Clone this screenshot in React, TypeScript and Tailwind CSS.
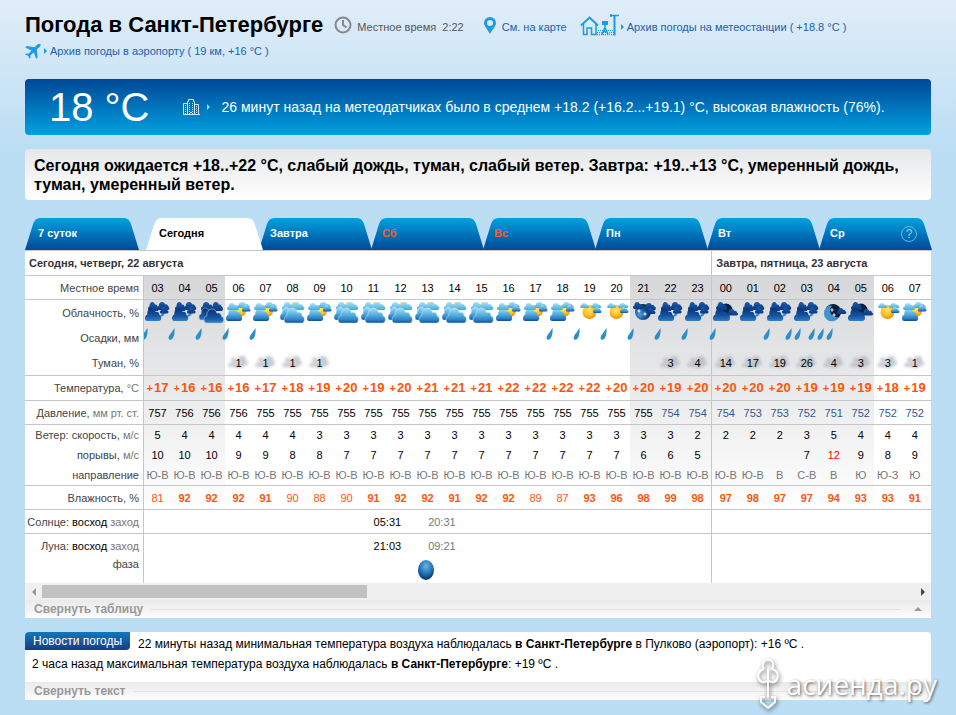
import type { ReactNode } from "react";

type Sky = "nightCloudy" | "nightOvercast" | "dayCloudy" | "overcast" | "sunny" | "moonClouds" | "moon" | "moonCloud";

interface Hour {
  time: string;
  sky: Sky;
  drops: number;
  fog?: number;
  temp: number;
  pressure: number;
  wind: number;
  gust?: number;
  dir: string;
  humidity: number;
}

const hour = (
  time: string,
  sky: Sky,
  drops: number,
  fog: number | undefined,
  temp: number,
  pressure: number,
  wind: number,
  gust: number | undefined,
  dir: string,
  humidity: number,
): Hour => ({ time, sky, drops, fog, temp, pressure, wind, gust, dir, humidity });

const none = undefined;

const hours: Hour[] = [
  hour("03", "nightCloudy", 1, none, 17, 757, 5, 10, "Ю-В", 81),
  hour("04", "nightCloudy", 1, none, 16, 756, 4, 10, "Ю-В", 92),
  hour("05", "nightOvercast", 1, none, 16, 756, 4, 10, "Ю-В", 92),
  hour("06", "dayCloudy", 1, 1, 16, 756, 4, 9, "Ю-В", 92),
  hour("07", "dayCloudy", 1, 1, 17, 755, 4, 9, "Ю-В", 91),
  hour("08", "overcast", 0, 1, 18, 755, 4, 8, "Ю-В", 90),
  hour("09", "dayCloudy", 0, 1, 19, 755, 3, 8, "Ю-В", 88),
  hour("10", "overcast", 0, none, 20, 755, 3, 7, "Ю-В", 90),
  hour("11", "overcast", 0, none, 19, 755, 3, 7, "Ю-В", 91),
  hour("12", "overcast", 0, none, 20, 755, 3, 7, "Ю-В", 92),
  hour("13", "overcast", 0, none, 21, 755, 3, 7, "Ю-В", 92),
  hour("14", "overcast", 0, none, 21, 755, 3, 7, "Ю-В", 91),
  hour("15", "overcast", 0, none, 21, 755, 3, 7, "Ю-В", 92),
  hour("16", "dayCloudy", 0, none, 22, 755, 3, 7, "Ю-В", 92),
  hour("17", "dayCloudy", 0, none, 22, 755, 3, 7, "Ю-В", 89),
  hour("18", "dayCloudy", 1, none, 22, 755, 3, 7, "Ю-В", 87),
  hour("19", "sunny", 1, none, 22, 755, 3, 7, "Ю-В", 93),
  hour("20", "sunny", 1, none, 20, 755, 3, 7, "Ю-В", 96),
  hour("21", "moonClouds", 1, none, 20, 755, 3, 6, "Ю-В", 98),
  hour("22", "nightCloudy", 1, 3, 19, 754, 3, 6, "Ю-В", 99),
  hour("23", "nightCloudy", 1, 4, 20, 754, 2, 5, "Ю-В", 98),
  hour("00", "moonCloud", 1, 14, 20, 754, 2, none, "Ю-В", 97),
  hour("01", "nightCloudy", 0, 17, 20, 753, 2, none, "Ю-В", 98),
  hour("02", "nightCloudy", 1, 19, 20, 753, 2, none, "В", 97),
  hour("03", "nightCloudy", 2, 26, 19, 752, 3, 7, "С-В", 97),
  hour("04", "moon", 3, 4, 19, 751, 5, 12, "В", 94),
  hour("05", "moonCloud", 0, 3, 19, 752, 4, 9, "Ю", 93),
  hour("06", "sunny", 0, 3, 18, 752, 4, 8, "Ю-З", 93),
  hour("07", "dayCloudy", 0, 1, 19, 752, 4, 9, "Ю", 91),
];

const TODAY_HOURS = 21;
const isNight = (h: Hour) => Number(h.time) < 6 || Number(h.time) > 20;

/* ---------- drawings ---------- */

function Gradients() {
  return (
    <svg width="0" height="0" className="absolute" aria-hidden="true">
      <defs>
        <linearGradient id="tab" x1="0" y1="0" x2="0" y2="1">
          <stop offset="0" stopColor="#02a1e1" />
          <stop offset="1" stopColor="#004896" />
        </linearGradient>
        <linearGradient id="day" x1="0" y1="0" x2="0" y2="1">
          <stop offset="0" stopColor="#a6e0f7" />
          <stop offset=".45" stopColor="#58b0df" />
          <stop offset=".8" stopColor="#2b80c4" />
          <stop offset="1" stopColor="#0a4c9a" />
        </linearGradient>
        <linearGradient id="dayLight" x1="0" y1="0" x2="0" y2="1">
          <stop offset="0" stopColor="#a9e4f9" />
          <stop offset="1" stopColor="#45a9da" />
        </linearGradient>
        <linearGradient id="night" x1="0" y1="0" x2="0" y2="1">
          <stop offset="0" stopColor="#1c5cab" />
          <stop offset=".5" stopColor="#124894" />
          <stop offset="1" stopColor="#0b3a85" />
        </linearGradient>
        <linearGradient id="nightFront" x1="0" y1="0" x2="0" y2="1">
          <stop offset="0" stopColor="#0a3274" />
          <stop offset=".6" stopColor="#15529f" />
          <stop offset="1" stopColor="#2f80c8" />
        </linearGradient>
        <radialGradient id="sun" cx=".45" cy=".35" r=".65">
          <stop offset="0" stopColor="#ffe96a" />
          <stop offset=".6" stopColor="#fdc021" />
          <stop offset="1" stopColor="#f08c0c" />
        </radialGradient>
        <radialGradient id="moonFill" cx=".3" cy=".65" r=".75">
          <stop offset="0" stopColor="#4aa3dd" />
          <stop offset=".5" stopColor="#1c559c" />
          <stop offset="1" stopColor="#0a1c3c" />
        </radialGradient>
        <radialGradient id="phase" cx=".5" cy=".3" r=".7">
          <stop offset="0" stopColor="#6db6e4" />
          <stop offset=".6" stopColor="#1f6fb4" />
          <stop offset="1" stopColor="#0b2f63" />
        </radialGradient>
        <filter id="soft" x="-30%" y="-30%" width="160%" height="160%">
          <feGaussianBlur stdDeviation="1.5" />
        </filter>
      </defs>
    </svg>
  );
}

function Cloud({ x, y, sx, sy, fill }: { x: number; y: number; sx: number; sy?: number; fill: string }) {
  return (
    <path
      transform={`translate(${x} ${y}) scale(${sx} ${sy ?? sx})`}
      fill={`url(#${fill})`}
      d="M2.500 10C.7 10 0 8.800 0 7.600 0 6 1.200 5.200 2.400 5.100 2.200 2.200 4.200 0 7 0c2 0 3.600 1 4.200 3 .3-.1.7-.2 1.200-.2 1.800 0 2.800 1.300 2.800 2.600 1.200.2 1.800 1.100 1.800 2.300C17 8.900 16.200 10 14.700 10z"
    />
  );
}

function Star({ x, y }: { x: number; y: number }) {
  return <path transform={`translate(${x} ${y})`} fill="#fff" d="M0-2.500.6-.6 2.500 0 .6.6 0 2.500-.6.6-2.500 0-.6-.6z" />;
}

const skies: Record<Sky, ReactNode> = {
  nightCloudy: (
    <>
      <path d="M14 9h7c1 4-1 7-5 7z" fill="#c9def1" />
      <path d="M16 16a5 5 0 0 0 5-5l-3 1z" fill="#3b86cb" />
      <Cloud x={4} y={1} sx={0.62} sy={0.9} fill="night" />
      <Cloud x={13} y={1} sx={0.72} sy={0.8} fill="night" />
      <Cloud x={16} y={6} sx={0.5} sy={0.65} fill="night" />
      <Cloud x={1} y={7} sx={0.95} sy={1.3} fill="nightFront" />
    </>
  ),
  nightOvercast: (
    <>
      <Cloud x={3} y={1} sx={0.75} sy={0.9} fill="night" />
      <Cloud x={13} y={1} sx={0.7} sy={0.9} fill="night" />
      <g stroke="#9cc2e6" strokeWidth=".5">
        <Cloud x={1} y={7} sx={0.9} sy={1.2} fill="nightFront" />
        <Cloud x={6} y={8} sx={1.15} sy={1.4} fill="nightFront" />
      </g>
    </>
  ),
  dayCloudy: (
    <>
      <circle cx="15.500" cy="10" r="5.500" fill="url(#sun)" />
      <Cloud x={12} y={1} sx={0.75} sy={0.6} fill="dayLight" />
      <Cloud x={17} y={4} sx={0.5} sy={0.65} fill="day" />
      <Cloud x={1} y={7} sx={0.95} sy={1.3} fill="day" />
      <Cloud x={2} y={2} sx={0.7} sy={0.7} fill="dayLight" />
    </>
  ),
  overcast: (
    <>
      <circle cx="16" cy="5" r="4" fill="#fbd75c" />
      <Cloud x={3} y={1} sx={0.75} sy={0.8} fill="dayLight" />
      <Cloud x={12} y={1} sx={0.78} sy={0.8} fill="dayLight" />
      <g stroke="#c8e9f9" strokeWidth=".4">
        <Cloud x={1} y={6} sx={0.9} sy={1.3} fill="day" />
        <Cloud x={5} y={7} sx={1.2} sy={1.5} fill="day" />
      </g>
    </>
  ),
  sunny: (
    <>
      <circle cx="13.500" cy="11" r="7" fill="url(#sun)" />
      <Cloud x={4} y={2} sx={0.55} sy={0.5} fill="dayLight" />
      <Cloud x={15} y={2} sx={0.62} sy={0.5} fill="dayLight" />
      <Cloud x={17} y={6} sx={0.5} sy={0.6} fill="day" />
    </>
  ),
  moonClouds: (
    <>
      <circle cx="13" cy="11" r="8" fill="url(#moonFill)" />
      <Cloud x={3} y={1} sx={0.6} sy={0.7} fill="night" />
      <Cloud x={14} y={2} sx={0.7} sy={0.7} fill="night" />
      <Cloud x={17} y={7} sx={0.5} sy={0.6} fill="night" />
      <Star x={9} y={10} />
      <Star x={15} y={13} />
    </>
  ),
  moon: (
    <>
      <circle cx="13" cy="11" r="8" fill="#0b1d3e" />
      <path d="M7 6a8 8 0 1 0 12 10c-3 1-9-1-9-7 0-2 1-3 2-4-2-1-4 0-5 1z" fill="#3f93d3" />
      <Star x={12} y={9} />
      <Star x={14} y={14} />
      <Cloud x={17} y={7} sx={0.55} sy={0.6} fill="night" />
    </>
  ),
  moonCloud: (
    <>
      <circle cx="14" cy="9" r="6.500" fill="#0b2145" />
      <Cloud x={4} y={1} sx={0.65} sy={0.8} fill="night" />
      <Cloud x={15} y={8} sx={0.65} sy={0.65} fill="night" />
      <Cloud x={1} y={7} sx={1} sy={1.3} fill="nightFront" />
    </>
  ),
};

function SkyIcon({ sky }: { sky: Sky }) {
  return (
    <svg width="27" height="24" viewBox="0 0 27 24" className="block">
      {skies[sky]}
    </svg>
  );
}

function Drops({ count, clipped }: { count: number; clipped: boolean }) {
  return (
    <div className={clipped ? "overflow-hidden" : ""}>
      <div className="-ml-[13px] flex w-[26px] justify-center gap-[2px]">
        {Array.from({ length: count }, (_, i) => (
          <svg key={i} width="7" height="12" viewBox="0 0 7 12" className="shrink-0">
            <path d="M6.500 0C6.900 4 6.200 8.500 4.400 10.800 2.800 12.600.200 12 .6 9.600 1 7 4.500 3.500 6.500 0z" fill="#2d8fc9" />
          </svg>
        ))}
      </div>
    </div>
  );
}

function Fog({ value }: { value: number }) {
  return (
    <div className="grid place-items-center">
      <svg width="27" height="20" viewBox="0 0 27 20" className="[grid-area:1/1]">
        <g filter="url(#soft)" fill="#a9adba" opacity=".65">
          <ellipse cx="9" cy="7" rx="3" ry="2.500" />
          <ellipse cx="17" cy="6" rx="4" ry="3" />
          <ellipse cx="20" cy="10" rx="3" ry="2.500" />
          <ellipse cx="7" cy="12" rx="4" ry="2" />
          <ellipse cx="14" cy="12" rx="6" ry="3" />
        </g>
      </svg>
      <span className="[grid-area:1/1]">{value}</span>
    </div>
  );
}

const ClockIcon = () => (
  <svg width="18" height="18" viewBox="0 0 18 18" fill="none" stroke="#85898d" strokeWidth="2">
    <circle cx="9" cy="9" r="7.500" />
    <path d="M9 4v5l3.500 2.500" />
  </svg>
);

const PinIcon = () => (
  <svg width="12" height="17" viewBox="0 0 12 17">
    <path fillRule="evenodd" fill="#1a9be6" d="M6 0a6 6 0 0 1 6 6c0 3.500-4 6.500-6 11C4 12.500 0 9.500 0 6a6 6 0 0 1 6-6zm0 3a3 3 0 1 0 0 6 3 3 0 0 0 0-6z" />
  </svg>
);

const StationIcon = () => (
  <svg width="39" height="22" viewBox="0 0 39 22" fill="none" stroke="#1a9be6" strokeWidth="2">
    <path d="M1 11.500 9.500 3.500l8.500 8" />
    <path d="M3.500 10v10.500H7V14h4.500v6.500H16V10" strokeWidth="1.500" />
    <path d="M17 20.500h17" strokeWidth="1.500" strokeDasharray="1 1" />
    <path d="M17 18.500h17M18 16.500h16" strokeWidth="1" strokeDasharray="1 1" />
    <path d="M22 7h6v4h-6z" fill="#1a9be6" stroke="none" />
    <path d="M25 11v3M22 20.500l3-7 3 7M22.500 17.500h5" strokeWidth="1.500" />
    <path d="M34.500 1.500v20" />
    <path d="M30 1.500h9M31 0v3" strokeWidth="1.500" />
  </svg>
);

const PlaneIcon = () => (
  <svg width="16" height="15" viewBox="0 0 16 15" fill="#1a9be6">
    <path d="M15.300.2c.8.600.2 2-.8 2.900L11.800 5.600 12.600 13.600l-1.400 1.200L8.800 8.500 5.400 11.200l.2 2.600-1 .9-1.500-2.900L0 10.500l1-.9 2.600.1L6.600 6.500.3 3.400l1.400-1.300 7.800 1.200L12.200.8c1-.9 2.400-1.300 3.100-.6z" />
  </svg>
);

const CityIcon = () => (
  <svg width="17" height="16" viewBox="0 0 17 16" fill="none" stroke="#cfe6f6">
    <path d="M.5 15.500v-11h4M4.500 15.500V2.500h1V.5h5v2h1v13M11.500 5.500h4v10M0 15.500h17" />
    <path d="M2.500 6v9M6.500 4v11M9.500 4v11M13.500 7v8" strokeDasharray="1 1" />
    <path d="M7 13.500h2" />
  </svg>
);

const Arrow = ({ color }: { color: string }) => (
  <svg width="3" height="6" viewBox="0 0 3 6" className="shrink-0">
    <path d="M0 0 3 3 0 6z" fill={color} />
  </svg>
);

/* ---------- tabs ---------- */

const laterDays = [
  { name: "Завтра", weekend: false },
  { name: "Сб", weekend: true },
  { name: "Вс", weekend: true },
  { name: "Пн", weekend: false },
  { name: "Вт", weekend: false },
  { name: "Ср", weekend: false },
];

function Tab({ children, active, className, textClass }: { children: ReactNode; active?: boolean; className: string; textClass: string }) {
  return (
    <button type="button" role="tab" aria-selected={!!active} className={`grid h-8 items-center text-left text-[11px] font-bold ${className}`}>
      <svg viewBox="0 0 112 32" preserveAspectRatio="none" className="h-8 w-full overflow-visible [grid-area:1/1]">
        <path d="M0 32 8 6Q10 0 15 0H98Q103 0 105 6L113 32z" fill={active ? "#fff" : "url(#tab)"} />
      </svg>
      <span className={`pb-px [grid-area:1/1] ${textClass}`}>{children}</span>
    </button>
  );
}

/* ---------- table ---------- */

function Row({
  label,
  height,
  line,
  children,
}: {
  label: ReactNode;
  height: string;
  line?: boolean;
  children: (h: Hour, index: number) => ReactNode;
}) {
  const border = line ? "border-t border-t-[#c6c6c8]" : "";
  return (
    <tr className={height}>
      <th scope="row" className={`border-r border-r-[#c6c6c8] pr-1 text-right font-normal whitespace-nowrap text-[#444] ${border}`}>
        {label}
      </th>
      {hours.map((h, i) => (
        <td key={i} className={`text-center whitespace-nowrap ${border} ${i === TODAY_HOURS ? "border-l border-l-[#c6c6c8]" : ""}`}>
          {children(h, i)}
        </td>
      ))}
      <td className={border} />
    </tr>
  );
}

function WideRow({ label, height, line, children }: { label: ReactNode; height: string; line?: boolean; children: ReactNode }) {
  const border = line ? "border-t border-t-[#c6c6c8]" : "";
  return (
    <tr className={height}>
      <th scope="row" className={`border-r border-r-[#c6c6c8] pr-1 text-right font-normal whitespace-nowrap text-[#444] ${border}`}>
        {label}
      </th>
      <td colSpan={TODAY_HOURS} className={`bg-white ${border}`}>
        <div className="flex justify-center gap-[27px] pr-1">{children}</div>
      </td>
      <td colSpan={hours.length - TODAY_HOURS + 1} className={`border-l border-l-[#c6c6c8] bg-white ${border}`} />
    </tr>
  );
}

const Unit = ({ children }: { children: ReactNode }) => <span className="text-[#777]">{children}</span>;

const RiseSet = ({ rise, set }: { rise: string; set: string }) => (
  <>
    <span className="text-black">{rise}</span>
    <span className="pr-[22px] text-[#777]">{set}</span>
  </>
);

function ForecastTable() {
  return (
    <table className="w-full table-fixed border-separate border-spacing-0 text-[11px] leading-[14px] text-black [&_td]:p-0 [&_th]:py-0 [&_th]:pl-0">
      <colgroup>
        <col className="w-[119px]" />
        {hours.map((h, i) => (
          <col
            key={i}
            className={`${i === TODAY_HOURS ? "w-[28px]" : "w-[27px]"} ${isNight(h) ? "bg-[linear-gradient(#d6d7d9_25px,#ffffff_260px)]" : ""}`}
          />
        ))}
        <col />
      </colgroup>
      <thead>
        <tr className="h-[25px] text-left text-[#333]">
          <th colSpan={TODAY_HOURS + 1} className="border-t border-[#c6c6c8]">
            <span className="pl-1">Сегодня, четверг, 22 августа</span>
          </th>
          <th colSpan={hours.length - TODAY_HOURS + 1} className="border-t border-l border-[#c6c6c8] bg-white">
            <span className="pl-1">Завтра, пятница, 23 августа</span>
          </th>
        </tr>
      </thead>
      <tbody>
        <Row label="Местное время" height="h-[24px]" line>
          {(h) => h.time}
        </Row>
        <Row label="Облачность, %" height="h-[26px]" line>
          {(h) => <SkyIcon sky={h.sky} />}
        </Row>
        <Row label="Осадки, мм" height="h-[25px]">
          {(h, i) => (h.drops ? <div className="-mt-[7px]"><Drops count={h.drops} clipped={i === 0} /></div> : null)}
        </Row>
        <Row label="Туман, %" height="h-[25px]">
          {(h) => (h.fog ? <Fog value={h.fog} /> : null)}
        </Row>
        <Row label={<>Температура, <Unit>°C</Unit></>} height="h-[25px]" line>
          {(h) => (
            <span className="text-[13px] font-bold text-[#fb560c]">
              <span className="mr-px text-[11px]">+</span>
              {h.temp}
            </span>
          )}
        </Row>
        <Row label={<>Давление, <Unit>мм рт. ст.</Unit></>} height="h-[24px]" line>
          {(h) => <span className={h.pressure < 755 ? "text-[#2f5a96]" : ""}>{h.pressure}</span>}
        </Row>
        <Row label={<>Ветер: скорость, <Unit>м/с</Unit></>} height="h-[21px]" line>
          {(h) => h.wind}
        </Row>
        <Row label={<>порывы, <Unit>м/с</Unit></>} height="h-[20px]">
          {(h) => <span className={h.gust && h.gust > 11 ? "text-[#f00]" : ""}>{h.gust}</span>}
        </Row>
        <Row label="направление" height="h-[20px]">
          {(h) => <span className="text-[#777]">{h.dir}</span>}
        </Row>
        <Row label="Влажность, %" height="h-[24px]" line>
          {(h) => <span className={`text-[#fb560c] ${h.humidity > 90 ? "font-bold" : ""}`}>{h.humidity}</span>}
        </Row>
        <WideRow label={<>Солнце: <span className="text-black">восход</span> <Unit>заход</Unit></>} height="h-[24px]" line>
          <RiseSet rise="05:31" set="20:31" />
        </WideRow>
        <WideRow label={<>Луна: <span className="text-black">восход</span> <Unit>заход</Unit></>} height="h-[24px]" line>
          <RiseSet rise="21:03" set="09:21" />
        </WideRow>
        <WideRow label={<div className="pb-3">фаза</div>} height="h-[26px]">
          <svg width="16" height="20" viewBox="0 0 16 20">
            <ellipse cx="8" cy="10" rx="8" ry="10" fill="url(#phase)" />
          </svg>
        </WideRow>
      </tbody>
    </table>
  );
}

function CollapseBar({ label }: { label: string }) {
  return (
    <button type="button" className="flex h-[18px] w-full items-center gap-2 bg-linear-to-b from-[#eaeaea] to-[#fcfcfc] px-[9px] text-[12px] font-bold text-[#999]">
      {label}
      <span className="mr-[6px] h-px flex-1 bg-[#e2e2e2]" />
      <svg width="8" height="5" viewBox="0 0 8 5">
        <path d="M4 0 8 4H0z" fill="#999" />
      </svg>
    </button>
  );
}

function ScrollBar() {
  return (
    <div className="flex h-[17px] items-center bg-[#f0f0f0]">
      <button type="button" aria-label="Назад" className="grid h-full w-[17px] place-items-center">
        <svg width="4" height="8" viewBox="0 0 4 8">
          <path d="M4 0v8L0 4z" fill="#999" />
        </svg>
      </button>
      <div className="h-full flex-1 py-[2px]">
        <div className="h-full w-[325px] bg-[#c1c1c1]" />
      </div>
      <button type="button" aria-label="Вперёд" className="grid h-full w-[17px] place-items-center">
        <svg width="4" height="8" viewBox="0 0 4 8">
          <path d="M0 0v8l4-4z" fill="#444" />
        </svg>
      </button>
    </div>
  );
}

function Watermark() {
  return (
    <div className="absolute right-[19px] bottom-[5px] flex items-center gap-[8px] text-white">
      <svg width="22" height="52" viewBox="0 0 22 52" fill="none" stroke="#fff" strokeWidth="2" className="drop-shadow-[1px_2px_2px_rgba(0,0,0,0.6)]">
        <path d="M7 11C4 6 7 1.500 11 1.500S18 6 15 11c5 1 7 6 5 10-2 4-6 4-9 1-3 3-7 3-9-1-2-4 0-9 5-10" />
        <path d="M11 11v29M8 39H4v5l7 6 7-6v-5h-4" />
      </svg>
      <span className="font-['Open_Sans',sans-serif] text-[28px] leading-[36px] [text-shadow:1px_1px_3px_rgba(0,0,0,0.65)]">асиенда.ру</span>
    </div>
  );
}

export default function App() {
  return (
    <div className="relative min-h-screen bg-[#bbdef4] bg-[linear-gradient(#e0edf8_0px,#bbdef4_150px)] bg-no-repeat px-[25px] pt-[9px] font-['Liberation_Sans',Arial,sans-serif]">
      <Gradients />

      <header className="h-[70px] text-[11px] leading-[16px] text-[#1b5faa]">
        <div className="flex h-[32px] items-center">
          <h1 className="text-[22px] leading-[28px] font-bold whitespace-nowrap text-black">Погода в Санкт-Петербурге</h1>
          <div className="ml-[11px] flex items-center gap-[5px] whitespace-pre text-[#555]">
            <ClockIcon />
            <span className="pt-1">Местное время  2:22</span>
          </div>
          <a href="#map" className="ml-[20px] flex items-center gap-[6px] whitespace-nowrap">
            <PinIcon />
            <span className="pt-1">См. на карте</span>
          </a>
          <a href="#station" className="ml-[13px] flex items-center whitespace-nowrap">
            <StationIcon />
            <span className="flex items-center gap-[3px] pt-1 pl-[2px]">
              <Arrow color="#1a9be6" />
              Архив погоды на метеостанции ( +18.8 °C )
            </span>
          </a>
        </div>
        <a href="#airport" className="flex w-fit items-center gap-[3px] pt-[2px]">
          <PlaneIcon />
          <Arrow color="#1a9be6" />
          Архив погоды в аэропорту ( 19 км, +16 °C )
        </a>
      </header>

      <section className="flex h-14 items-center rounded-[4px] bg-linear-to-b from-[#004896] to-[#02a1e0] pl-6 text-white">
        <span className="text-[40px] leading-[48px] whitespace-nowrap">18 °C</span>
        <span className="ml-[33px]">
          <CityIcon />
        </span>
        <span className="mr-[12px] ml-[7px]">
          <Arrow color="#9fd4f2" />
        </span>
        <p className="text-[14px] whitespace-nowrap">26 минут назад на метеодатчиках было в среднем +18.2 (+16.2...+19.1) °C, высокая влажность (76%).</p>
      </section>

      <section className="mt-[14px] rounded-[4px] bg-linear-to-b from-[#e6e7e9] to-white px-[9px] pt-[7px] pb-[6px]">
        <p className="text-[16px] leading-[19px] font-bold text-black">
          Сегодня ожидается +18..+22 °C, слабый дождь, туман, слабый ветер. Завтра: +19..+13 °C, умеренный дождь, туман, умеренный ветер.
        </p>
      </section>

      <div role="tablist" className="mt-[18px] flex">
        <Tab className="w-[113px]" textClass="pl-[13px] text-white">
          7 суток
        </Tab>
        <Tab active className="relative z-10 -mr-[3px] ml-[8px] w-[116px]" textClass="pl-[13px] text-black">
          Сегодня
        </Tab>
        {laterDays.map((day, i) => (
          <Tab key={day.name} className="flex-1" textClass={day.weekend ? "pl-[11px] text-[#fb5a28]" : "pl-[11px] text-white"}>
            {i === laterDays.length - 1 ? (
              <span className="flex items-center justify-between pr-[14px]">
                {day.name}
                <span className="grid size-4 place-items-center rounded-full border border-[#6fb4e0] text-[12px] leading-none font-normal text-[#9fd0ee]">?</span>
              </span>
            ) : (
              day.name
            )}
          </Tab>
        ))}
      </div>

      <section className="bg-white">
        <div className="overflow-hidden">
          <ForecastTable />
        </div>
        <ScrollBar />
        <CollapseBar label="Свернуть таблицу" />
      </section>

      <section className="mt-[14px] rounded-t-[4px] bg-white text-[12px] leading-[20px] text-black">
        <div className="flex items-start gap-[8px]">
          <h2 className="rounded-tl-[4px] rounded-br-[4px] bg-linear-to-b from-[#0f78ba] to-[#1b3a86] px-2 leading-[18px] whitespace-nowrap text-white">Новости погоды</h2>
          <p className="pt-[2px]">
            22 минуты назад минимальная температура воздуха наблюдалась <b>в Санкт-Петербурге</b> в Пулково (аэропорт): +16 ºC .
          </p>
        </div>
        <p className="pb-[8px] pl-[7px]">
          2 часа назад максимальная температура воздуха наблюдалась <b>в Санкт-Петербурге</b>: +19 ºC .
        </p>
        <CollapseBar label="Свернуть текст" />
      </section>

      <Watermark />
    </div>
  );
}
